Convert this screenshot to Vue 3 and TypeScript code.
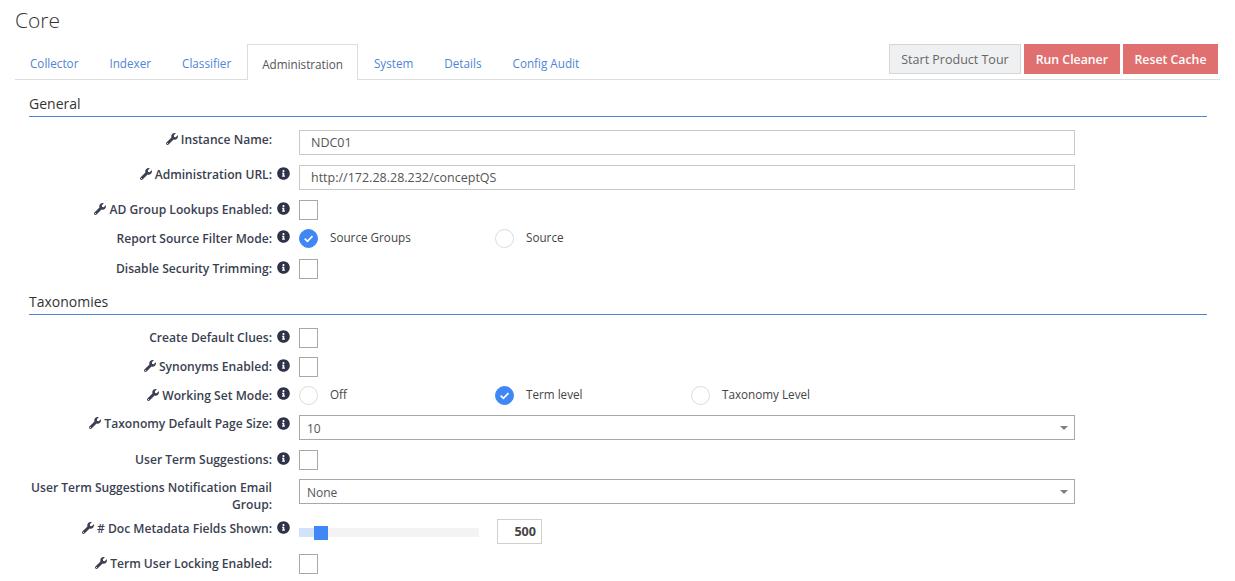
<script setup lang="ts">
type Row = {
  label: string;
  wrench?: boolean;
  info?: boolean;
  type: "input" | "check" | "radio" | "select" | "slider";
  value?: string;
  options?: string[];
  selected?: number;
  gap: number;
};

const tabs = ["Collector", "Indexer", "Classifier", "Administration", "System", "Details", "Config Audit"];
const general: Row[] = [
  { label: "Instance Name:", wrench: true, type: "input", value: "NDC01", gap: 10 },
  { label: "Administration URL:", wrench: true, info: true, type: "input", value: "http://172.28.28.232/conceptQS", gap: 10 },
  { label: "AD Group Lookups Enabled:", wrench: true, info: true, type: "check", gap: 8 },
  { label: "Report Source Filter Mode:", info: true, type: "radio", options: ["Source Groups", "Source"], selected: 0, gap: 11 },
  { label: "Disable Security Trimming:", info: true, type: "check", gap: 0 },
];
const taxonomies: Row[] = [
  { label: "Create Default Clues:", info: true, type: "check", gap: 9 },
  { label: "Synonyms Enabled:", wrench: true, info: true, type: "check", gap: 8 },
  { label: "Working Set Mode:", wrench: true, info: true, type: "radio", options: ["Off", "Term level", "Taxonomy Level"], selected: 1, gap: 10 },
  { label: "Taxonomy Default Page Size:", wrench: true, info: true, type: "select", value: "10", gap: 10 },
  { label: "User Term Suggestions:", info: true, type: "check", gap: 9 },
  { label: "User Term Suggestions Notification Email Group:", type: "select", value: "None", gap: 6 },
  { label: "# Doc Metadata Fields Shown:", wrench: true, info: true, type: "slider", value: "500", gap: 10 },
  { label: "Term User Locking Enabled:", wrench: true, type: "check", gap: 0 },
];
const sections = [
  { title: "General", rows: general },
  { title: "Taxonomies", rows: taxonomies },
];
const wrenchPath =
  "M507.73 109.1c-2.24-9.03-13.54-12.09-20.12-5.51l-74.36 74.36-67.88-11.31-11.31-67.88 74.36-74.36c6.62-6.62 3.43-17.9-5.66-20.16-47.38-11.74-99.55.91-136.58 37.93-39.64 39.64-50.55 97.1-34.05 147.2L18.74 402.76c-24.99 24.99-24.99 65.51 0 90.5 24.99 24.99 65.51 24.99 90.5 0l213.21-213.21c50.12 16.71 107.47 5.68 147.37-34.22 37.07-37.07 49.7-89.32 37.91-136.73zM64 472c-13.25 0-24-10.75-24-24 0-13.26 10.75-24 24-24s24 10.74 24 24c0 13.25-10.75 24-24 24z";
const infoPath =
  "M256 8C119.043 8 8 119.083 8 256c0 136.997 111.043 248 248 248s248-111.003 248-248C504 119.083 392.957 8 256 8zm0 110c23.196 0 42 18.804 42 42s-18.804 42-42 42-42-18.804-42-42 18.804-42 42-42zm56 254c0 6.627-5.373 12-12 12h-88c-6.627 0-12-5.373-12-12v-24c0-6.627 5.373-12 12-12h12v-64h-12c-6.627 0-12-5.373-12-12v-24c0-6.627 5.373-12 12-12h64c6.627 0 12 5.373 12 12v100h12c6.627 0 12 5.373 12 12v24z";
</script>

<template>
  <div class="page">
    <h1 class="title">Core</h1>
    <div class="tabbar">
      <ul class="tabs">
        <li v-for="t in tabs" :key="t" class="tab" :class="{ active: t === 'Administration' }">{{ t }}</li>
      </ul>
      <div class="actions">
        <button class="btn grey">Start Product Tour</button>
        <button class="btn red">Run Cleaner</button>
        <button class="btn red">Reset Cache</button>
      </div>
    </div>

    <section v-for="s in sections" :key="s.title" class="section">
      <h2 class="heading">{{ s.title }}</h2>
      <div
        v-for="r in s.rows"
        :key="r.label"
        class="row"
        :class="[`row-${r.type}`, `gap-${r.gap}`]"
      >
        <label class="label">
          <svg v-if="r.wrench" class="wrench" viewBox="0 0 512 512"><path :d="wrenchPath" /></svg>
          {{ r.label }}
        </label>
        <div class="info-cell">
          <svg v-if="r.info" class="info" viewBox="0 0 512 512"><path :d="infoPath" /></svg>
        </div>
        <div class="control">
          <input v-if="r.type === 'input'" class="text" :value="r.value" readonly />
          <div v-else-if="r.type === 'check'" class="check"></div>
          <div v-else-if="r.type === 'radio'" class="radios">
            <div v-for="(o, i) in r.options" :key="o" class="radio-opt">
              <span class="radio" :class="{ on: i === r.selected }">
                <svg v-if="i === r.selected" viewBox="0 0 20 20" class="tick">
                  <path d="M6 10.2l2.9 2.8L14.2 7.6" />
                </svg>
              </span>
              <span class="radio-text">{{ o }}</span>
            </div>
          </div>
          <div v-else-if="r.type === 'select'" class="select">
            <span class="select-value">{{ r.value }}</span>
            <i class="caret"></i>
          </div>
          <div v-else class="slider-wrap">
            <div class="track">
              <div class="fill"></div>
              <div class="thumb"></div>
            </div>
            <div class="num">{{ r.value }}</div>
          </div>
        </div>
      </div>
    </section>
  </div>
</template>

<style>
html, body { margin: 0; background: #fff; overflow: hidden; }
</style>

<style scoped>
.page {
  width: 1235px;
  height: 581px;
  box-sizing: border-box;
  padding: 0 15px;
  font-family: "Open Sans", "Noto Sans", sans-serif;
  font-size: 12px;
  color: #3a3f51;
  overflow: hidden;
}
.title {
  margin: 0;
  padding-top: 7px;
  height: 44px;
  box-sizing: border-box;
  font-size: 21px;
  line-height: 27px;
  font-weight: 300;
  color: #333;
}
.tabbar {
  width: 1205px;
  height: 36px;
  box-sizing: border-box;
  display: flex;
  justify-content: space-between;
  border-bottom: 1px solid #ddd;
}
.tabs {
  list-style: none;
  margin: 0;
  padding: 0;
  display: flex;
  height: 36px;
}
.tab {
  box-sizing: border-box;
  height: 36px;
  padding: 11px 15px 0;
  margin-right: 1px;
  line-height: 16px;
  color: #4f85d8;
  font-size: 11.7px;
}
.tab.active {
  padding: 11px 14px 0;
  background: #fff;
  border: 1px solid #ddd;
  border-bottom: 0;
  color: #555;
  position: relative;
  z-index: 1;
}
.actions {
  display: flex;
  gap: 3px;
  padding-right: 2px;
}
.btn {
  height: 30px;
  box-sizing: border-box;
  border: 1px solid transparent;
  font-family: inherit;
  font-size: 12.5px;
  line-height: 16px;
  padding: 2px 11px 0;
}
.btn.grey {
  background: #eff0f1;
  border-color: #d4d6d8;
  color: #666;
}
.btn.red {
  background: #e07070;
  border-color: #e07070;
  color: #fff;
  font-size: 12.3px;
  font-weight: 600;
}
.btn.red:last-child { padding: 2px 10.5px 0; }
.section {
  margin-left: 14px;
  width: 1178px;
}
.heading {
  margin: 0 0 13px;
  padding-top: 15px;
  height: 37px;
  box-sizing: border-box;
  border-bottom: 1px solid #4a86cf;
  font-size: 14px;
  line-height: 18px;
  font-weight: 400;
  color: #333;
}
.section + .section .heading { padding-top: 14px; height: 36px; }
.row { display: flex; align-items: flex-start; }
.gap-0 { margin-bottom: 0; }
.gap-6 { margin-bottom: 6px; }
.gap-8 { margin-bottom: 8px; }
.gap-9 { margin-bottom: 9px; }
.gap-10 { margin-bottom: 10px; }
.gap-11 { margin-bottom: 11px; }
.label {
  width: 243px;
  flex: none;
  text-align: right;
  font-weight: 600;
  font-size: 12.1px;
  line-height: 17px;
  color: #3a3f51;
  padding-top: 1px;
}
.row-radio .label { padding-top: 2px; }
.row-select .label { padding-top: 0; }
.row-input .label { padding-top: 1px; }
.row-slider .label { padding-top: 1px; }
.wrench {
  width: 12px;
  height: 12px;
  fill: #3a3f51;
  vertical-align: -1px;
}
.info-cell {
  width: 27px;
  flex: none;
  height: 16px;
  display: flex;
  padding-left: 5px;
  box-sizing: border-box;
  padding-top: 2px;
}
.info { width: 13px; height: 13px; fill: #2f3349; }
.control { flex: 1; min-width: 0; }
.text {
  display: block;
  width: 776px;
  height: 25px;
  box-sizing: border-box;
  border: 1px solid #c9c9c9;
  padding: 0 11px;
  font-family: inherit;
  font-size: 12.5px;
  color: #555;
  outline: none;
  background: #fff;
}
.check {
  width: 19px;
  height: 20px;
  box-sizing: border-box;
  border: 1px solid #a8a8a8;
  background: #fff;
}
.radios { display: flex; height: 20px; }
.radio-opt { width: 196px; display: flex; align-items: center; }
.radio {
  width: 19px;
  height: 19px;
  box-sizing: border-box;
  border: 1px solid #dcdcdc;
  border-radius: 50%;
  margin-right: 12px;
  flex: none;
}
.radio.on { background: #3f87f5; border-color: #3f87f5; }
.tick { display: block; width: 19px; height: 19px; margin: -1px; fill: none; stroke: #fff; stroke-width: 1.8; }
.radio-text { color: #444; font-size: 11.7px; line-height: 16px; margin-top: -2px; }
.select {
  width: 776px;
  height: 25px;
  box-sizing: border-box;
  border: 1px solid #a8a8a8;
  padding: 0 7px;
  display: flex;
  align-items: center;
  justify-content: space-between;
  color: #555;
  font-size: 12px;
}
.select-value { padding-top: 2px; }
.caret {
  width: 0;
  height: 0;
  margin-right: -1px;
  border-left: 4px solid transparent;
  border-right: 4px solid transparent;
  border-top: 4px solid #808080;
}
.slider-wrap { display: flex; align-items: center; height: 25px; }
.track {
  position: relative;
  width: 180px;
  height: 9px;
  background: #f3f3f3;
  margin-right: 18px;
  margin-top: 2px;
}
.fill { width: 16px; height: 9px; background: #d2e2fa; }
.thumb {
  position: absolute;
  left: 15px;
  top: -2px;
  width: 14px;
  height: 14px;
  background: #3f87f5;
}
.num {
  width: 45px;
  height: 25px;
  box-sizing: border-box;
  border: 1px solid #cfcfcf;
  text-align: right;
  padding-right: 5px;
  font-weight: 700;
  font-size: 12.6px;
  line-height: 23px;
  color: #444;
}
</style>
